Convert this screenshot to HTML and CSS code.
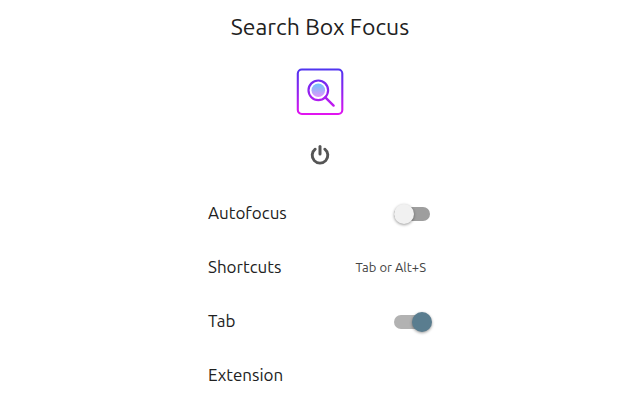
FILE: index.html
```html
<!DOCTYPE html>
<html lang="en">
<head>
<meta charset="utf-8">
<title>Search Box Focus</title>
<link rel="stylesheet" href="styles.css">
</head>
<body>
<main class="popup">
  <h1 class="title">Search Box Focus</h1>
  <svg class="logo" viewBox="0 0 48 48" aria-hidden="true">
    <defs>
      <linearGradient id="edge" gradientUnits="userSpaceOnUse" x1="0" y1="1" x2="0" y2="47">
        <stop offset="0" stop-color="#4f35f0"/>
        <stop offset="0.5" stop-color="#9222f0"/>
        <stop offset="1" stop-color="#e414f0"/>
      </linearGradient>
      <linearGradient id="lens" x1="0" y1="0" x2="0" y2="1">
        <stop offset="0" stop-color="#6cc4fa"/>
        <stop offset="1" stop-color="#e294fb"/>
      </linearGradient>
    </defs>
    <rect x="1.8" y="1.5" width="44.5" height="44.5" rx="4" fill="none" stroke="url(#edge)" stroke-width="2.1"/>
    <circle cx="22.3" cy="22.3" r="6.8" fill="url(#lens)"/>
    <circle cx="22.3" cy="22.3" r="9.8" fill="none" stroke="url(#edge)" stroke-width="2.2"/>
    <path d="M29.3 29.3 L37.6 37.6" fill="none" stroke="url(#edge)" stroke-width="2.4" stroke-linecap="round"/>
  </svg>
  <button class="power" type="button" aria-label="Power">
    <svg class="power-icon" viewBox="0 0 20 20" aria-hidden="true">
      <path d="M5.2 4.2 A7.8 7.8 0 1 0 14.8 4.2" fill="none" stroke="currentColor" stroke-width="2.9" stroke-linecap="round"/>
      <path d="M10 1.5 V9" fill="none" stroke="currentColor" stroke-width="3" stroke-linecap="round"/>
    </svg>
  </button>
  <div class="settings">
    <div class="row">
      <label for="autofocus">Autofocus</label>
      <input class="switch" type="checkbox" id="autofocus">
    </div>
    <div class="row">
      <span>Shortcuts</span>
      <span class="keys">Tab or Alt+S</span>
    </div>
    <div class="row">
      <label for="tab">Tab</label>
      <input class="switch" type="checkbox" id="tab" checked>
    </div>
    <div class="row">
      <span>Extension</span>
    </div>
  </div>
</main>
</body>
</html>
```
FILE: styles.css
```css
body {
  margin: 0;
  background: #fff;
  color: #212121;
  font-family: Ubuntu, "Noto Sans", sans-serif;
  font-size: 17px;
  line-height: 24px;
}

.popup {
  display: flex;
  flex-direction: column;
  align-items: center;
  padding: 12px 16px 0;
}

.title {
  margin: 0 0 26px;
  font-size: 23px;
  font-weight: 400;
  line-height: 30px;
}

.logo {
  width: 48px;
  height: 48px;
}

.power {
  display: flex;
  margin: 24px 0 31px;
  padding: 5px;
  border: 0;
  background: none;
  color: #555;
}

.power-icon {
  width: 20px;
  height: 20px;
}

.settings {
  display: flex;
  flex-direction: column;
  gap: 30px;
  width: 100%;
  max-width: 224px;
}

.row {
  display: flex;
  align-items: center;
  justify-content: space-between;
}

.keys {
  padding-right: 6px;
  color: #444;
  font-size: 13px;
}

.switch {
  appearance: none;
  position: relative;
  width: 38px;
  height: 20px;
  margin: 0;
}

.switch::before {
  content: "";
  position: absolute;
  inset: 4px 2px 2px 0;
  border-radius: 7px;
  background: #9e9e9e;
}

.switch::after {
  content: "";
  position: absolute;
  top: 1px;
  left: 0;
  width: 20px;
  height: 20px;
  border-radius: 50%;
  background: #f1f1f1;
  box-shadow: 0 1px 3px rgba(0, 0, 0, 0.4);
}

.switch:checked::before {
  background: #b2b2b2;
}

.switch:checked::after {
  left: 18px;
  background: #5a7d8f;
}
```
